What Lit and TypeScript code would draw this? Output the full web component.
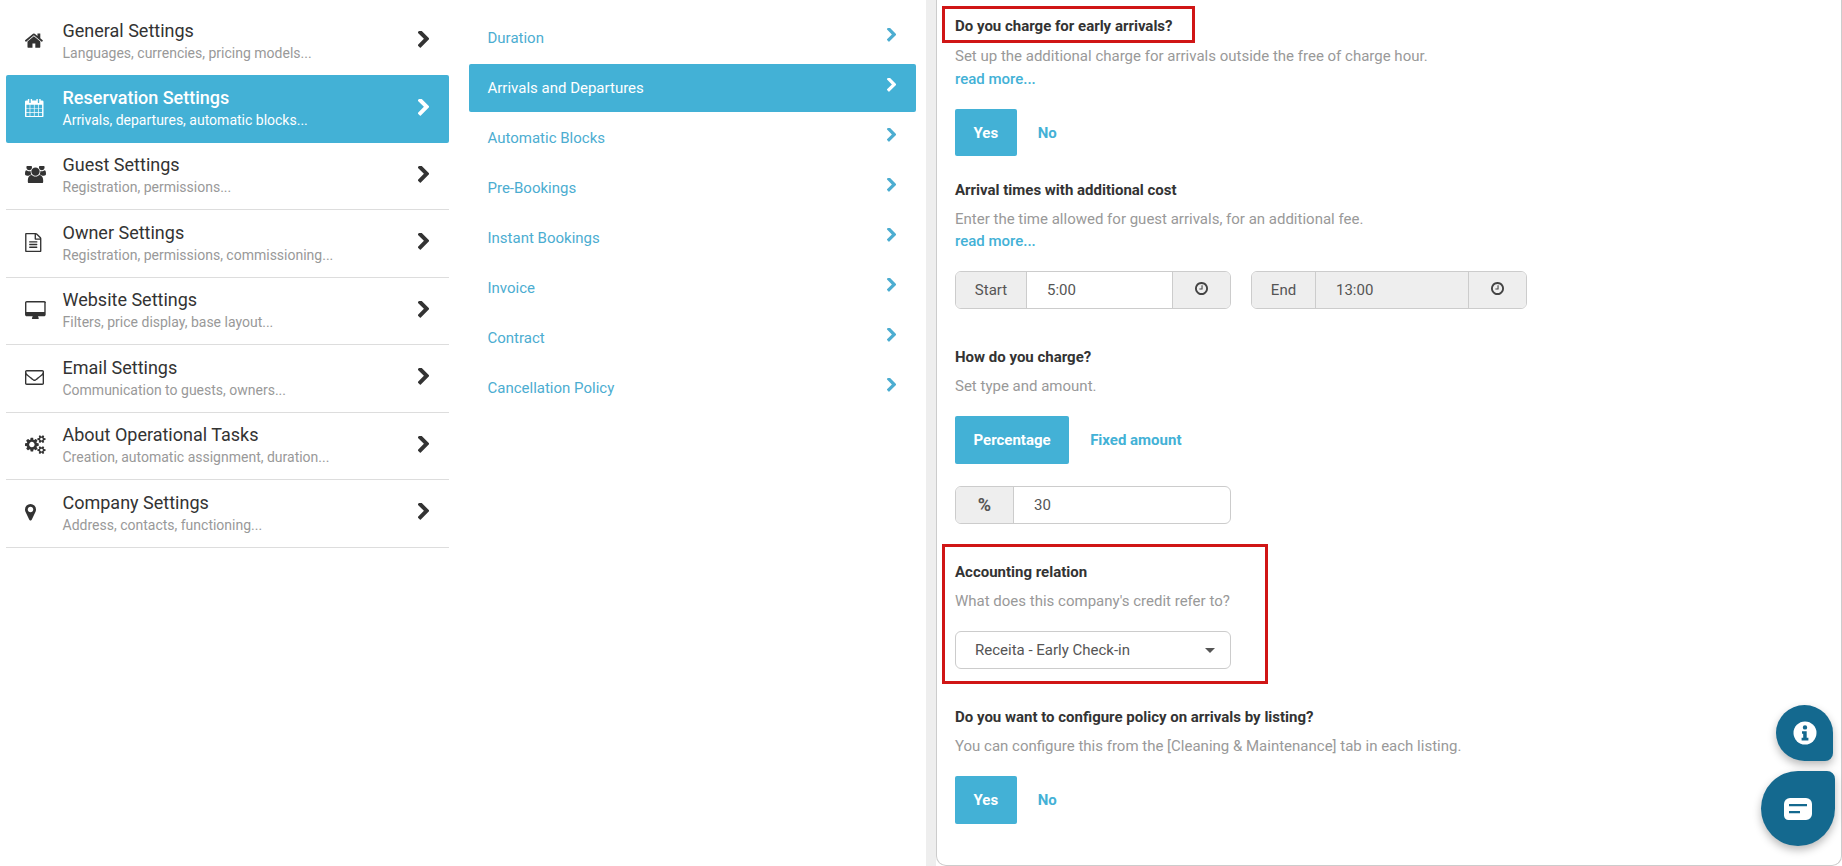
import { LitElement, html, css, svg } from "lit";
import { customElement } from "lit/decorators.js";

const P: Record<string, { vb: string; w: number; h: number; d: string }> = {
  home: { vb: "96 128 1600 1536", w: 17.8, h: 17.1, d: "M1472 992v480q0 26-19 45t-45 19h-384v-384h-256v384h-384q-26 0-45-19t-19-45v-480q0-1 .5-3t.5-3l575-474 575 474q1 2 1 6zm223-69l-62 74q-8 9-21 11h-3q-13 0-21-7l-692-577-692 577q-12 8-24 7-13-2-21-11l-62-74q-8-10-7-23.5t11-21.5l719-599q32-26 76-26t76 26l244 204v-195q0-14 9-23t23-9h192q14 0 23 9t9 23v408l219 182q10 8 11 21.5t-7 23.5z" },
  calendar: { vb: "64 128 1664 1664", w: 18.5, h: 18.5, d: "M192 1664h288v-288h-288v288zm352 0h320v-288h-320v288zm-352-352h288v-320h-288v320zm352 0h320v-320h-320v320zm-352-384h288v-288h-288v288zm736 736h320v-288h-320v288zm-384-736h320v-288h-320v288zm768 736h288v-288h-288v288zm-384-352h320v-320h-320v320zm-352-864v-288q0-13-9.5-22.5t-22.5-9.5h-64q-13 0-22.5 9.5t-9.5 22.5v288q0 13 9.5 22.5t22.5 9.5h64q13 0 22.5-9.5t9.5-22.5zm736 864h288v-320h-288v320zm-384-384h320v-288h-320v288zm384 0h288v-288h-288v288zm32-480v-288q0-13-9.5-22.5t-22.5-9.5h-64q-13 0-22.5 9.5t-9.5 22.5v288q0 13 9.5 22.5t22.5 9.5h64q13 0 22.5-9.5t9.5-22.5zm384-64v1280q0 52-38 90t-90 38h-1408q-52 0-90-38t-38-90v-1280q0-52 38-90t90-38h128v-96q0-66 47-113t113-47h64q66 0 113 47t47 113v96h384v-96q0-66 47-113t113-47h64q66 0 113 47t47 113v96h128q52 0 90 38t38 90z" },
  users: { vb: "0 128 1920 1536", w: 21, h: 16.8, d: "M593 896q-162 5-265 128h-134q-82 0-138-40.5t-56-118.5q0-353 124-353 6 0 43.5 21t97.5 42.5 119 21.5q67 0 133-23-5 37-5 66 0 139 81 256zm1071 637q0 120-73 189.5t-194 69.5h-874q-121 0-194-69.5t-73-189.5q0-53 3.5-103.5t14-109 26.5-108.5 43-97.5 62-81 85.5-53.5 111.5-20q10 0 43 21.5t73 48 107 48 135 21.5 135-21.5 107-48 73-48 43-21.5q61 0 111.5 20t85.5 53.5 62 81 43 97.5 26.5 108.5 14 109 3.5 103.5zm-1024-1277q0 106-75 181t-181 75-181-75-75-181 75-181 181-75 181 75 75 181zm704 384q0 159-112.5 271.5t-271.5 112.5-271.5-112.5-112.5-271.5 112.5-271.5 271.5-112.5 271.5 112.5 112.5 271.5zm576 225q0 78-56 118.5t-138 40.5h-134q-103-123-265-128 81-117 81-256 0-29-5-66 66 23 133 23 59 0 119-21.5t97.5-42.5 43.5-21q124 0 124 353zm-128-609q0 106-75 181t-181 75-181-75-75-181 75-181 181-75 181 75 75 181z" },
  file: { vb: "128 0 1536 1792", w: 16.5, h: 19, d: "M1596 380q28 28 48 76t20 88v1152q0 40-28 68t-68 28h-1344q-40 0-68-28t-28-68v-1600q0-40 28-68t68-28h896q40 0 88 20t76 48zm-444-244v376h376q-10-29-22-41l-313-313q-12-12-41-22zm384 1528v-1024h-416q-40 0-68-28t-28-68v-416h-768v1536h1280zm-1024-864q0-14 9-23t23-9h704q14 0 23 9t9 23v64q0 14-9 23t-23 9h-704q-14 0-23-9t-9-23v-64zm736 224q14 0 23 9t9 23v64q0 14-9 23t-23 9h-704q-14 0-23-9t-9-23v-64q0-14 9-23t23-9h704zm0 256q14 0 23 9t9 23v64q0 14-9 23t-23 9h-704q-14 0-23-9t-9-23v-64q0-14 9-23t23-9h704z" },
  desktop: { vb: "64 0 1920 1664", w: 20.7, h: 17.9, d: "M1856 992v-832q0-13-9.5-22.5t-22.5-9.5h-1600q-13 0-22.5 9.5t-9.5 22.5v832q0 13 9.5 22.5t22.5 9.5h1600q13 0 22.5-9.5t9.5-22.5zm128-832v1088q0 66-47 113t-113 47h-544q0 37 16 77.5t32 71 16 43.5q0 26-19 45t-45 19h-512q-26 0-45-19t-19-45q0-14 16-44t32-70 16-78h-544q-66 0-113-47t-47-113v-1088q0-66 47-113t113-47h1632q66 0 113 47t47 113z" },
  envelope: { vb: "0 256 1792 1408", w: 19, h: 15, d: "M1664 1504v-768q-32 36-69 66-268 206-426 338-51 43-83 67t-86.5 48.5-102.5 24.5h-2q-48 0-102.5-24.5t-86.5-48.5-83-67q-158-132-426-338-37-30-69-66v768q0 13 9.5 22.5t22.5 9.5h1472q13 0 22.5-9.5t9.5-22.5zm0-1051v-24.5l-.5-13-3-12.5-5.5-9-9-7.5-14-2.5h-1472q-13 0-22.5 9.5t-9.5 22.5q0 168 147 284 193 152 401 317 6 5 35 29.5t46 37.5 44.5 31.5 50.5 27.5 43 9h2q20 0 43-9t50.5-27.5 44.5-31.5 46-37.5 35-29.5q208-165 401-317 54-43 100.5-115.5t46.5-131.5zm128-37v1088q0 66-47 113t-113 47h-1472q-66 0-113-47t-47-113v-1088q0-66 47-113t113-47h1472q66 0 113 47t47 113z" },
  cogs: { vb: "0 0 1920 1792", w: 20.6, h: 19.2, d: "M896 896q0-106-75-181t-181-75-181 75-75 181 75 181 181 75 181-75 75-181zm768 512q0-52-38-90t-90-38-90 38-38 90q0 53 37.5 90.5t90.5 37.5 90.5-37.5 37.5-90.5zm0-1024q0-52-38-90t-90-38-90 38-38 90q0 53 37.5 90.5t90.5 37.5 90.5-37.5 37.5-90.5zm-384 421v185q0 10-7 19.5t-16 10.5l-155 24q-11 35-32 76 34 48 90 115 7 11 7 20 0 12-7 19-23 30-82.5 89.5t-78.5 59.5q-11 0-21-7l-115-90q-37 19-77 31-11 108-23 155-7 24-30 24h-186q-11 0-20-7.5t-10-17.5l-23-153q-34-10-75-31l-118 89q-7 7-20 7-11 0-21-8-144-133-144-160 0-9 7-19 10-14 41-53t47-61q-23-44-35-82l-152-24q-10-1-17-9.5t-7-19.5v-185q0-10 7-19.5t16-10.5l155-24q11-35 32-76-34-48-90-115-7-11-7-20 0-12 7-20 22-30 82-89t79-59q11 0 21 7l115 90q34-18 77-32 11-108 23-154 7-24 30-24h186q11 0 20 7.5t10 17.5l23 153q34 10 75 31l118-89q8-7 20-7 11 0 21 8 144 133 144 160 0 8-7 19-12 16-42 54t-45 60q23 48 34 82l152 23q10 2 17 10.5t7 19.5zm640 533v140q0 16-149 31-12 27-30 52 51 113 51 138 0 4-4 7-122 71-124 71-8 0-46-47t-52-68q-20 2-30 2t-30-2q-14 21-52 68t-46 47q-2 0-124-71-4-3-4-7 0-25 51-138-18-25-30-52-149-15-149-31v-140q0-16 149-31 13-29 30-52-51-113-51-138 0-4 4-7 4-2 35-20t59-34 30-16q8 0 46 46.5t52 67.5q20-2 30-2t30 2q51-71 92-112l6-2q4 0 124 70 4 3 4 7 0 25-51 138 17 23 30 52 149 15 149 31zm0-1024v140q0 16-149 31-12 27-30 52 51 113 51 138 0 4-4 7-122 71-124 71-8 0-46-47t-52-68q-20 2-30 2t-30-2q-14 21-52 68t-46 47q-2 0-124-71-4-3-4-7 0-25 51-138-18-25-30-52-149-15-149-31v-140q0-16 149-31 13-29 30-52-51-113-51-138 0-4 4-7 4-2 35-20t59-34 30-16q8 0 46 46.5t52 67.5q20-2 30-2t30 2q51-71 92-112l6-2q4 0 124 70 4 3 4 7 0 25-51 138 17 23 30 52 149 15 149 31z" },
  marker: { vb: "384 128 1024 1536", w: 11, h: 16.5, d: "M1152 640q0-106-75-181t-181-75-181 75-75 181 75 181 181 75 181-75 75-181zm256 0q0 109-33 179l-364 774q-16 33-47.5 52t-67.5 19-67.5-19-46.5-52l-365-774q-33-70-33-179 0-212 150-362t362-150 362 150 150 362z" },
  chevron: { vb: "365 128 1036 1536", w: 11.5, h: 17, d: "M1363 877l-742 742q-19 19-45 19t-45-19l-166-166q-19-19-19-45t19-45l531-531-531-531q-19-19-19-45t19-45l166-166q19-19 45-19t45 19l742 742q19 19 19 45t-19 45z" },
  chevronSm: { vb: "365 128 1036 1536", w: 9.5, h: 14, d: "M1363 877l-742 742q-19 19-45 19t-45-19l-166-166q-19-19-19-45t19-45l531-531-531-531q-19-19-19-45t19-45l166-166q19-19 45-19t45 19l742 742q19 19 19 45t-19 45z" },
  clock: { vb: "128 128 1536 1536", w: 13, h: 13, d: "M1024 544v448q0 14-9 23t-23 9h-320q-14 0-23-9t-9-23v-64q0-14 9-23t23-9h224v-352q0-14 9-23t23-9h64q14 0 23 9t9 23zm416 352q0-148-73-273t-198-198-273-73-273 73-198 198-73 273 73 273 198 198 273 73 273-73 198-198 73-273zm224 0q0 209-103 385.5t-279.5 279.5-385.5 103-385.5-103-279.5-279.5-103-385.5 103-385.5 279.5-279.5 385.5-103 385.5 103 279.5 279.5 103 385.5z" },
};

const icon = (n: string) => {
  const p = P[n];
  return html`<svg class="ic" width=${p.w} height=${p.h} viewBox=${p.vb} fill="currentColor">${svg`<path d=${p.d}></path>`}</svg>`;
};

const mainItems = [
  ["home", "General Settings", "Languages, currencies, pricing models..."],
  ["calendar", "Reservation Settings", "Arrivals, departures, automatic blocks..."],
  ["users", "Guest Settings", "Registration, permissions..."],
  ["file", "Owner Settings", "Registration, permissions, commissioning..."],
  ["desktop", "Website Settings", "Filters, price display, base layout..."],
  ["envelope", "Email Settings", "Communication to guests, owners..."],
  ["cogs", "About Operational Tasks", "Creation, automatic assignment, duration..."],
  ["marker", "Company Settings", "Address, contacts, functioning..."],
];
const subItems = ["Duration", "Arrivals and Departures", "Automatic Blocks", "Pre-Bookings", "Instant Bookings", "Invoice", "Contract", "Cancellation Policy"];

@customElement("app-root")
export class AppRoot extends LitElement {
  static styles = css`
    :host { display: flex; width: 100%; height: 866px; overflow: hidden; position: relative; background: #fff;
      font-family: Roboto, "Liberation Sans", sans-serif; font-size: 15px; color: #333; }
    .ic { display: block; flex: none; }
    .left { width: 460px; flex: none; box-sizing: border-box; padding: 7.5px 11px 0 6px; }
    .row { box-sizing: border-box; height: 67.5px; display: flex; align-items: center; padding: 0 20px 2px 19px; border-bottom: 1px solid #ddd; }
    .row.first { border-bottom: 0; }
    .row.active { background: #43b1d6; color: #fff; border-bottom: 0; border-radius: 2px; }
    .row-icon { width: 38px; flex: none; display: flex; align-items: center; color: #333; margin-right: -0.5px; }
    .row.active .row-icon, .row.active .row-chev { color: #fff; }
    .row-text { flex: 1; min-width: 0; padding-top: 1px; }
    .row-title { font-size: 18px; line-height: 24px; color: #333; }
    .row.active .row-title { color: #fff; font-weight: 500; }
    .row-sub { font-size: 14px; line-height: 20px; color: #999; }
    .row.active .row-sub { color: #fff; }
    .row-chev { color: #333; flex: none; margin-bottom: 1px; }

    .mid { width: 466px; flex: none; box-sizing: border-box; padding: 13px 10px 0 9px; }
    .sub { box-sizing: border-box; height: 50px; display: flex; align-items: center; justify-content: space-between; padding: 0 20px 0 18.5px; color: #4cadd1; font-size: 15px; }
    .sub .ic { margin-bottom: 7px; }
    .sub.active { background: #43b1d6; color: #fff; height: 48px; margin: 1px 0; border-radius: 2px; }

    .strip { width: 10px; flex: none; background: #eee; }
    .card { flex: 1; box-sizing: border-box; background: #fff; border: 1px solid #ccc; border-width: 0 1px 1px 1px; border-radius: 0 0 10px 10px; padding: 6px 0 0 18px; height: 866px; }

    .mark { border: 3px solid #d01616; box-sizing: border-box; margin-left: -13px; padding-left: 10px; }
    .mark-a { width: 253px; height: 37px; padding-top: 7px; }
    .mark-b { width: 326px; height: 140px; padding-top: 15px; margin-top: 20px; }
    .h { font-size: 15px; font-weight: 700; line-height: 20px; color: #333; }
    .p { line-height: 20px; color: #999; margin-top: 9px; }
    .p.tight { margin-top: 3px; }
    .more { line-height: 20px; color: #43b1d6; font-weight: 500; display: block; margin-top: 3px; }
    .more.t2 { margin-top: 2px; }
    .toggle { display: flex; margin-top: 20px; font-weight: 700; color: #43b1d6; }
    .toggle > span { display: flex; align-items: center; padding: 0 21px; }
    .toggle > .on { background: #43b1d6; color: #fff; padding: 0 18.5px; border-radius: 2px; }
    .h47 { height: 47px; }
    .h48 { height: 48px; }
    .mt24 { margin-top: 24px; }
    .mt38 { margin-top: 38px; }
    .mt23 { margin-top: 23px; }
    .mt20 { margin-top: 20px; }
    .mt22 { margin-top: 22px; }

    .groups { display: flex; gap: 20px; }
    .group { box-sizing: border-box; width: 276px; height: 38px; border: 1px solid #ccc; border-radius: 6px; display: flex; overflow: hidden; color: #555; background: #fff; line-height: 36px; }
    .add { background: #eee; flex: none; display: flex; align-items: center; justify-content: center; box-sizing: border-box; }
    .add.l { border-right: 1px solid #ccc; }
    .add.r { border-left: 1px solid #ccc; width: 58px; padding-bottom: 4px; color: #444; }
    .w71 { width: 71px; }
    .w64 { width: 64px; }
    .w58 { width: 58px; font-weight: 700; font-size: 18px; }
    .val { flex: 1; padding-left: 20px; }
    .val.off { background: #eee; }
    .select { box-sizing: border-box; width: 276px; height: 38px; margin-top: 20px; border: 1px solid #ccc; border-radius: 6px; display: flex; align-items: center; justify-content: space-between; padding: 0 15px 0 19px; color: #555; }
    .caret { width: 0; height: 0; border-left: 5px solid transparent; border-right: 5px solid transparent; border-top: 5px solid #555; }

    .fab { position: absolute; background: #14698f; display: flex; align-items: center; justify-content: center; box-shadow: 0 4px 8px rgba(0,0,0,.28); }
    .fab.info { left: 1776px; top: 705px; width: 57px; height: 56px; border-radius: 50% 50% 8px 50%; }
    .fab.chat { left: 1761px; top: 771px; width: 74px; height: 75px; border-radius: 50% 8px 50% 50%; }
  `;

  render() {
    return html`
      <div class="left">
        ${mainItems.map(([ic, t, s], i) => html`
          <div class="row ${i === 1 ? "active" : ""} ${i === 0 ? "first" : ""}">
            <div class="row-icon">${icon(ic)}</div>
            <div class="row-text">
              <div class="row-title">${t}</div>
              <div class="row-sub">${s}</div>
            </div>
            <div class="row-chev">${icon("chevron")}</div>
          </div>`)}
      </div>
      <div class="mid">
        ${subItems.map((t, i) => html`<div class="sub ${i === 1 ? "active" : ""}"><span>${t}</span>${icon("chevronSm")}</div>`)}
      </div>
      <div class="strip"></div>
      <div class="card">
        <div class="mark mark-a"><div class="h">Do you charge for early arrivals?</div></div>
        <div class="p tight">Set up the additional charge for arrivals outside the free of charge hour.</div>
        <a class="more">read more...</a>
        <div class="toggle h47"><span class="on">Yes</span><span>No</span></div>

        <div class="h mt24">Arrival times with additional cost</div>
        <div class="p">Enter the time allowed for guest arrivals, for an additional fee.</div>
        <a class="more t2">read more...</a>
        <div class="groups mt20">
          <div class="group"><div class="add l w71">Start</div><div class="val">5:00</div><div class="add r">${icon("clock")}</div></div>
          <div class="group"><div class="add l w64">End</div><div class="val off">13:00</div><div class="add r">${icon("clock")}</div></div>
        </div>

        <div class="h mt38">How do you charge?</div>
        <div class="p">Set type and amount.</div>
        <div class="toggle h48"><span class="on">Percentage</span><span>Fixed amount</span></div>
        <div class="group mt22"><div class="add l w58">%</div><div class="val">30</div></div>

        <div class="mark mark-b">
          <div class="h">Accounting relation</div>
          <div class="p">What does this company's credit refer to?</div>
          <div class="select"><span>Receita - Early Check-in</span><span class="caret"></span></div>
        </div>

        <div class="h mt23">Do you want to configure policy on arrivals by listing?</div>
        <div class="p">You can configure this from the [Cleaning &amp; Maintenance] tab in each listing.</div>
        <div class="toggle h48"><span class="on">Yes</span><span>No</span></div>
      </div>
      <div class="fab info">
        <svg width="24" height="24" viewBox="0 0 24 24"><circle cx="12" cy="12" r="11.5" fill="#fff"></circle><path fill="#14698f" d="M12 4.2a2.2 2.2 0 1 1 0 4.4 2.2 2.2 0 0 1 0-4.4zM9 10.2h4.7v6.6H15.4v2.6H8.6v-2.6h1.6v-4H9z"></path></svg>
      </div>
      <div class="fab chat">
        <svg width="28" height="22" viewBox="0 0 28 22"><path fill="#fff" d="M6 0h16a6 6 0 0 1 6 6v10a6 6 0 0 1-6 6H4.5C2 22 0 20 0 17.5V6a6 6 0 0 1 6-6z"></path><path fill="#14698f" d="M5 6h18v2.2H5zM5 13h11v2.2H5z"></path></svg>
      </div>
    `;
  }
}
